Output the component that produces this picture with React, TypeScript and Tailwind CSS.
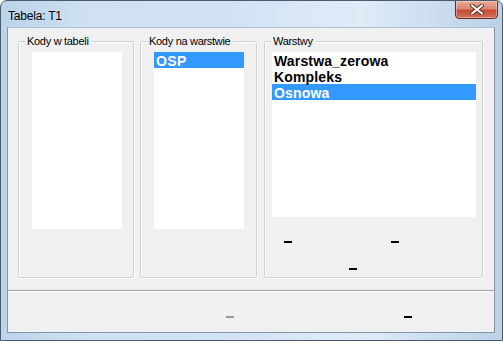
import React from "react";

function Dash({ className }: { className: string }) {
  return <div className={"h-[2px] w-[8px] " + className} />;
}

function Group({
  label,
  className,
  children,
}: {
  label: string;
  className: string;
  children: React.ReactNode;
}) {
  return (
    <div
      className={
        "relative h-[237px] rounded-[2px] border border-[#d2d2d2] shadow-[inset_1px_1px_0_#ffffff,1px_1px_0_#ffffff] " +
        className
      }
    >
      <span className="absolute left-[6px] top-[-7px] bg-[#f0f0f0] px-[2px] text-[11px] leading-[13px] tracking-[-0.3px] text-black">
        {label}
      </span>
      {children}
    </div>
  );
}

export default function App() {
  return (
    <div
      className="flex h-[341px] w-[503px] flex-col overflow-hidden rounded-t-[7px] border border-[#4a5b6e] bg-[linear-gradient(90deg,#bcd3eb_0%,#cfe1f3_18%,#d2e2f3_45%,#dfebf7_72%,#bad1e9_100%)]"
      style={{ fontFamily: '"Liberation Sans", Arial, sans-serif' }}
    >
      {/* title bar */}
      <div className="flex h-[26px] shrink-0 items-start justify-between">
        <div className="pl-[7px] pt-[9px] text-[12px] leading-[13px] tracking-[-0.2px] text-black">
          Tabela: T1
        </div>
        <div className="mr-[4px] mt-[-1px] flex h-[19px] w-[43px] items-center justify-center rounded-b-[4px] border border-[#6b2a22] bg-[linear-gradient(180deg,#e9a996_0%,#d98870_45%,#c64c36_55%,#d5705a_100%)] shadow-[inset_0_0_0_1px_rgba(255,255,255,0.35)]">
          <svg width="14" height="11" viewBox="0 0 14 11">
            <path
              d="M2 1.5 L12 9.5 M12 1.5 L2 9.5"
              stroke="#5a2a22"
              strokeWidth="4"
              strokeLinecap="round"
            />
            <path
              d="M2 1.5 L12 9.5 M12 1.5 L2 9.5"
              stroke="#ffffff"
              strokeWidth="2.2"
              strokeLinecap="round"
            />
          </svg>
        </div>
      </div>

      {/* client area */}
      <div className="ml-[6px] flex h-[306px] w-[488px] shrink-0 flex-col border border-[#8196ab] border-t-[#a9bfd5] bg-[#f0f0f0]">
        <div className="flex gap-[6px] pl-[10px] pt-[13px]">
          <Group label="Kody w tabeli" className="w-[116px] pl-[13px] pt-[10px]">
            <div className="h-[177px] w-[90px] bg-white" />
          </Group>
          <Group label="Kody na warstwie" className="w-[117px] pl-[13px] pt-[10px]">
            <div className="h-[177px] w-[90px] bg-white">
              <div className="h-[16px] bg-[#3399ff] pl-[2px] pt-[3px] text-[14px] font-bold leading-[13px] tracking-[0.4px] text-white">
                OSP
              </div>
            </div>
          </Group>
          <Group label="Warstwy" className="ml-[1px] w-[219px] pl-[7px] pt-[10px]">
            <div className="h-[165px] w-[204px] bg-white text-[14px] font-bold leading-[13px] tracking-[0.15px]">
              <div className="h-[16px] pl-[2px] pt-[3px] text-black">Warstwa_zerowa</div>
              <div className="h-[16px] pl-[2px] pt-[3px] text-black">Kompleks</div>
              <div className="h-[16px] bg-[#3399ff] pl-[2px] pt-[3px] text-white">Osnowa</div>
            </div>
            <div className="mt-[24px] flex">
              <Dash className="ml-[12px] bg-black" />
              <Dash className="ml-[99px] bg-black" />
            </div>
            <div className="mt-[25px] flex">
              <Dash className="ml-[77px] bg-black" />
            </div>
          </Group>
        </div>

        <div className="mt-[12px] h-px w-full bg-[#a0a0a0] shadow-[0_1px_0_#ffffff]" />

        <div className="flex pt-[25px]">
          <Dash className="ml-[218px] bg-[#9a9a9a]" />
          <Dash className="ml-[170px] bg-black" />
        </div>
      </div>
    </div>
  );
}
